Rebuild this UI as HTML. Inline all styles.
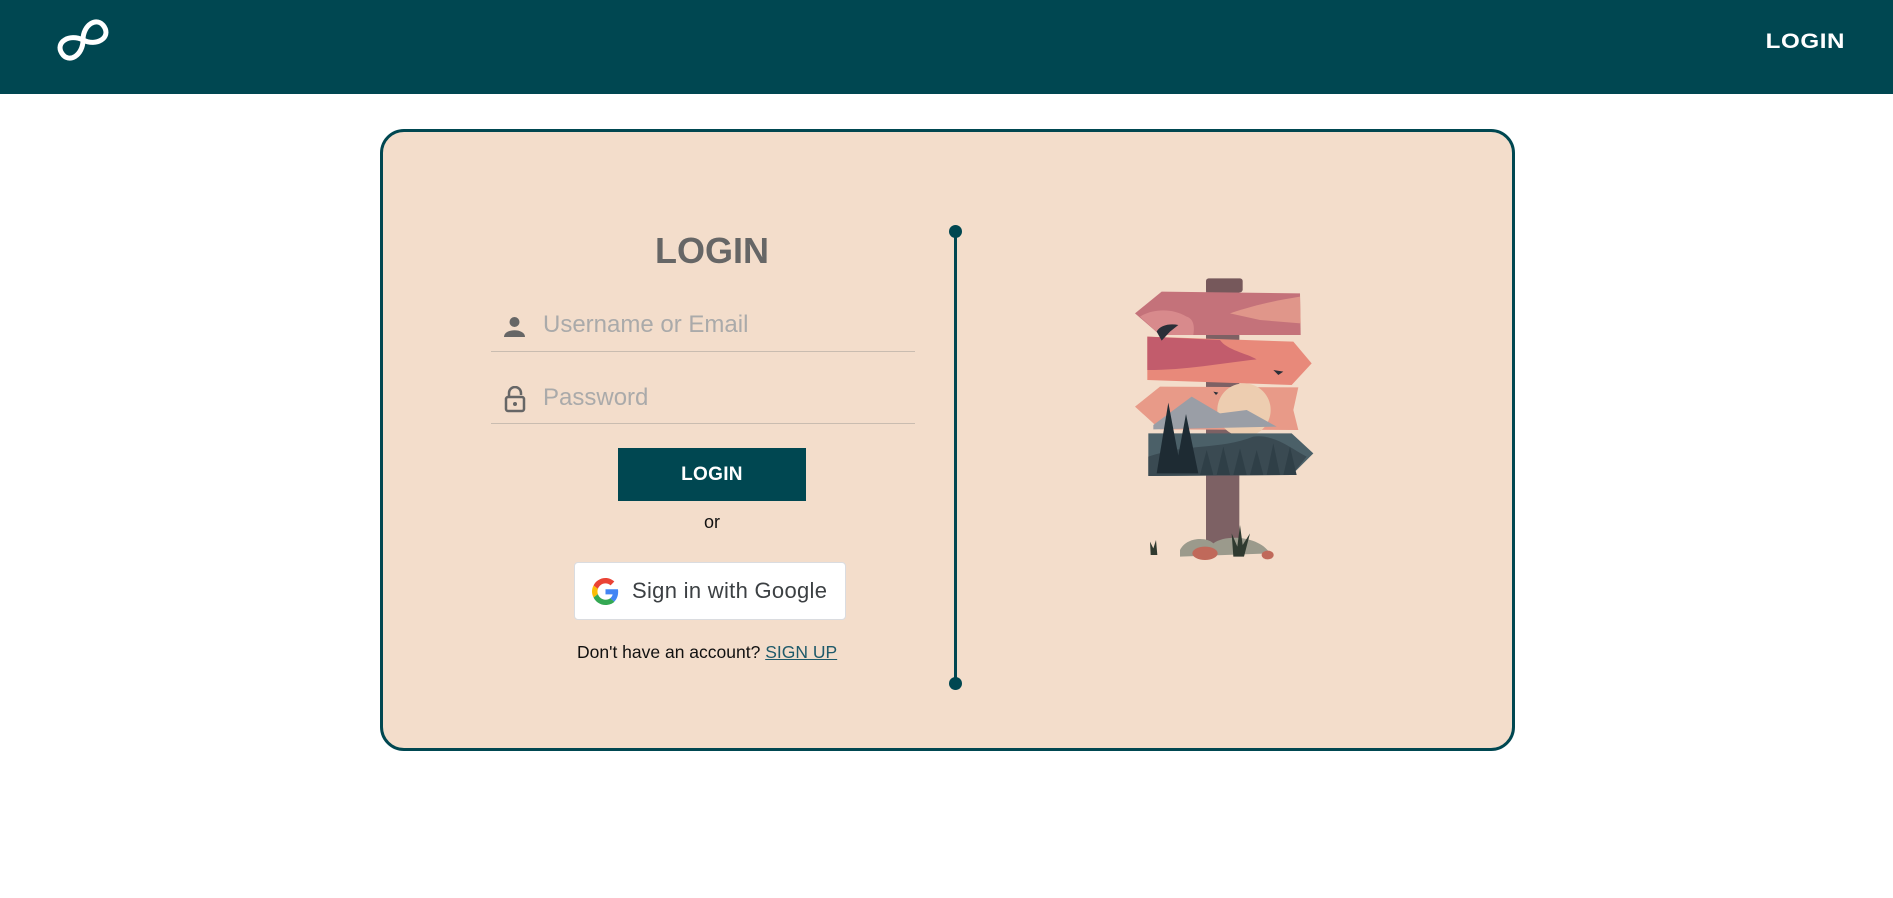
<!DOCTYPE html>
<html><head><meta charset="utf-8"><style>
*{margin:0;padding:0;box-sizing:border-box}
body{width:1893px;height:898px;background:#fff;font-family:"Liberation Sans",Arial,sans-serif;position:relative;overflow:hidden}
.hdr{position:absolute;left:0;top:0;width:1893px;height:94px;background:#004751}
.hdr .lg{position:absolute;right:48px;top:30px;color:#fff;font-weight:bold;font-size:21px;letter-spacing:0.5px;transform:scaleX(1.15);transform-origin:right}
.card{position:absolute;left:380px;top:129px;width:1135px;height:622px;background:#f3ddcb;border:3px solid #004751;border-radius:24px}
.abs{position:absolute}
.title{left:0;width:1424px;top:230px;text-align:center;font-weight:bold;font-size:36px;color:#666;}
.ph{color:#aaa;font-size:24px}
.line{height:1px;background:#c9bcb0;left:491px;width:424px}
.btn{left:618px;top:448px;width:188px;height:53px;background:#004751;color:#fff;font-weight:bold;font-size:19px;text-align:center;line-height:53px;letter-spacing:0.3px}
.gbtn{left:574px;top:562px;width:272px;height:58px;background:#fff;border:1px solid #dadce0;border-radius:4px}
</style></head><body>
<div class="hdr">
<svg class="abs" style="left:54px;top:14px" width="58" height="52" viewBox="-29 -26 58 52"><g transform="rotate(-32)"><path d="M0,0 C8,-13 25,-13 25,0 C25,13 8,13 0,0 C-8,-13 -25,-13 -25,0 C-25,13 -8,13 0,0Z" fill="none" stroke="#fff" stroke-width="5"/></g></svg>
<div class="lg">LOGIN</div>
</div>
<div class="card"></div>
<div class="abs title">LOGIN</div>
<svg class="abs" style="left:504px;top:317px" width="21" height="20" viewBox="0 0 21 20"><circle cx="10.5" cy="5" r="5" fill="#666"/><path d="M0,20 C0,11 21,11 21,20Z" fill="#666"/></svg>
<div class="abs ph" style="left:543px;top:311px">Username or Email</div>
<div class="abs line" style="top:351px"></div>
<svg class="abs" style="left:504px;top:386px" width="22" height="27" viewBox="0 0 22 27"><path d="M5,11 V7 a6,6 0 0 1 12,0 V9" fill="none" stroke="#666" stroke-width="2.5"/><rect x="2" y="11" width="18" height="14" rx="2" fill="none" stroke="#666" stroke-width="2.5"/><circle cx="11" cy="18" r="2" fill="#666"/></svg>
<div class="abs ph" style="left:543px;top:384px">Password</div>
<div class="abs line" style="top:423px"></div>
<div class="abs btn">LOGIN</div>
<div class="abs" style="left:0;width:1424px;text-align:center;top:512px;font-size:18px;color:#111">or</div>
<div class="abs gbtn">
<svg class="abs" style="left:17px;top:15px" width="27" height="27" viewBox="0 0 48 48"><path fill="#EA4335" d="M24 9.5c3.5 0 6.6 1.2 9 3.5l6.7-6.7C35.6 2.4 30.2 0 24 0 14.6 0 6.6 5.4 2.7 13.3l7.8 6C12.4 13.7 17.7 9.5 24 9.5z"/><path fill="#4285F4" d="M46.5 24.5c0-1.6-.1-3.1-.4-4.5H24v9h12.7c-.6 3-2.3 5.5-4.8 7.2l7.6 5.9c4.4-4.1 7-10.1 7-17.6z"/><path fill="#FBBC05" d="M10.5 28.7c-.5-1.5-.8-3-.8-4.7s.3-3.2.8-4.7l-7.8-6C1 16.6 0 20.2 0 24s1 7.4 2.7 10.7l7.8-6z"/><path fill="#34A853" d="M24 48c6.5 0 11.9-2.1 15.9-5.8l-7.6-5.9c-2.1 1.4-4.9 2.3-8.3 2.3-6.3 0-11.6-4.2-13.5-9.9l-7.8 6C6.6 42.6 14.6 48 24 48z"/></svg>
<div class="abs" style="left:57px;top:15px;font-size:22px;color:#3c4043;letter-spacing:0.3px">Sign in with Google</div>
</div>
<div class="abs" style="left:577px;top:642px;font-size:17.5px;color:#111">Don't have an account? <span style="color:#1e5a6a;text-decoration:underline">SIGN UP</span></div>
<div class="abs" style="left:954px;top:231px;width:3px;height:452px;background:#004751"></div>
<div class="abs" style="left:949px;top:225px;width:13px;height:13px;border-radius:50%;background:#004751"></div>
<div class="abs" style="left:949px;top:677px;width:13px;height:13px;border-radius:50%;background:#004751"></div>
<svg class="abs" style="left:1120px;top:270px" width="210" height="300" viewBox="0 0 630 900">
<rect x="258" y="60" width="100" height="790" fill="#7d6164"/>
<rect x="258" y="25" width="110" height="42" rx="8" fill="#76585b"/>
<path d="M45,130 L125,65 L540,70 L542,195 L120,195Z" fill="#c4727a"/>
<path d="M330,130 C420,100 480,90 540,80 L542,160 L420,150Z" fill="#e0968a"/>
<path d="M60,140 C90,120 150,110 200,140 C230,150 220,190 220,195 L120,195Z" fill="#d88a8c"/>
<path d="M82,200 L520,215 L575,280 L515,345 L82,330Z" fill="#e8897a"/>
<path d="M82,200 L300,210 C320,240 380,250 410,268 C300,280 200,300 82,300Z" fill="#c25c6c"/>
<path d="M45,410 L120,350 L535,352 L520,420 L535,480 L120,478Z" fill="#e89a88"/>
<circle cx="372" cy="420" r="80" fill="#edcdb0"/>
<path d="M100,465 L215,380 L300,430 L380,420 L470,470 L100,478Z" fill="#9a9ea6"/>
<path d="M85,490 L515,490 L580,550 L515,615 L85,618Z" fill="#4b6068"/>
<path d="M85,560 C200,520 300,540 400,500 C460,490 520,540 560,560 L515,615 L85,618Z" fill="#3a4a52"/>
<path d="M240,615 L260,540 L280,615Z M290,615 L310,530 L330,615Z M340,615 L360,535 L380,615Z M390,615 L410,540 L430,615Z M440,615 L460,520 L480,615Z M490,615 L510,530 L530,615Z" fill="#2f3f47"/>
<path d="M145,398 L110,610 L185,610Z M198,432 L165,610 L235,610Z" fill="#1e2b33"/>
<path d="M180,840 C200,800 260,800 280,820 C320,790 420,800 450,850 L180,860Z" fill="#9b9a8c"/>
<ellipse cx="255" cy="850" rx="38" ry="20" fill="#c0695a"/>
<ellipse cx="443" cy="855" rx="18" ry="13" fill="#c0695a"/>
<path d="M110,185 C120,165 150,160 175,165 L150,185 L125,212Z" fill="#2a2f38"/>
<path d="M460,300 L490,305 L475,315Z M280,365 L295,368 L288,375Z" fill="#2a2f38"/>
<path d="M340,860 L335,790 L352,830 L360,765 L368,825 L390,790 L372,860Z M92,855 L90,815 L100,835 L108,810 L112,855Z" fill="#2f3a30"/>
</svg>
</body></html>
